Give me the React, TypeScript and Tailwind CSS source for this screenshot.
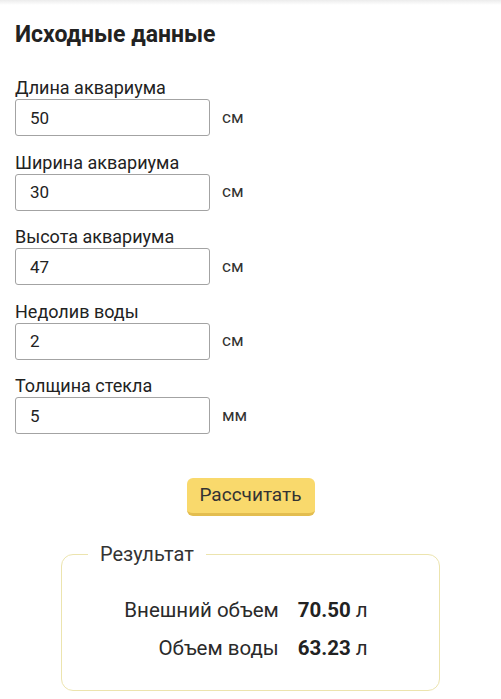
import React from "react";

const fields = [
  { label: "Длина аквариума", value: "50", unit: "см" },
  { label: "Ширина аквариума", value: "30", unit: "см" },
  { label: "Высота аквариума", value: "47", unit: "см" },
  { label: "Недолив воды", value: "2", unit: "см" },
  { label: "Толщина стекла", value: "5", unit: "мм" },
];

export default function App() {
  return (
    <div
      className="relative min-h-[699px] w-[501px] bg-white text-[#222]"
      style={{ fontFamily: "Roboto, 'Noto Sans', sans-serif" }}
    >
      <div className="absolute left-0 right-0 top-0 h-[5px] bg-gradient-to-b from-[#ececec] to-white" />
      <div className="px-[15px] pt-[21px]">
        <h2 className="text-[23px] font-bold leading-[28px] text-[#222]">Исходные данные</h2>
        <div className="mt-[29px] flex flex-col gap-[16.5px]">
          {fields.map((f) => (
            <div key={f.label} className="flex flex-col">
              <label className="text-[18px] leading-[20px] text-[#222]">{f.label}</label>
              <div className="mt-[1px] flex items-center">
                <input
                  readOnly
                  value={f.value}
                  className="h-[37px] w-[195px] rounded-[3px] border border-[#a3a3a3] bg-white px-[14px] text-[17px] text-[#222] outline-none"
                />
                <span className="ml-[12px] text-[17px] text-[#333]">{f.unit}</span>
              </div>
            </div>
          ))}
        </div>
        <div className="mt-[44px] flex justify-center">
          <button className="h-[38px] w-[128px] rounded-[6px] border-b-[3px] border-[#e3bd4f] bg-[#f9d96c] text-[19px] text-[#333]">
            Рассчитать
          </button>
        </div>
      </div>
      <fieldset className="mx-auto mt-[27px] w-[379px] rounded-[12px] border border-[#ece4ae] px-[26px] pb-[30px]">
        <legend className="px-3 text-[20px] leading-[22px] text-[#333]">Результат</legend>
        <div className="mr-[9px] mt-[33px] grid grid-cols-[auto_auto] justify-center gap-x-[19px] gap-y-[14px] text-[20.5px] leading-[24px]">
          <span className="text-right text-[#2a2a2a]">Внешний объем</span>
          <span className="text-[#2a2a2a]"><b className="font-bold text-[#222]">70.50</b> л</span>
          <span className="text-right text-[#2a2a2a]">Объем воды</span>
          <span className="text-[#2a2a2a]"><b className="font-bold text-[#222]">63.23</b> л</span>
        </div>
      </fieldset>
    </div>
  );
}
